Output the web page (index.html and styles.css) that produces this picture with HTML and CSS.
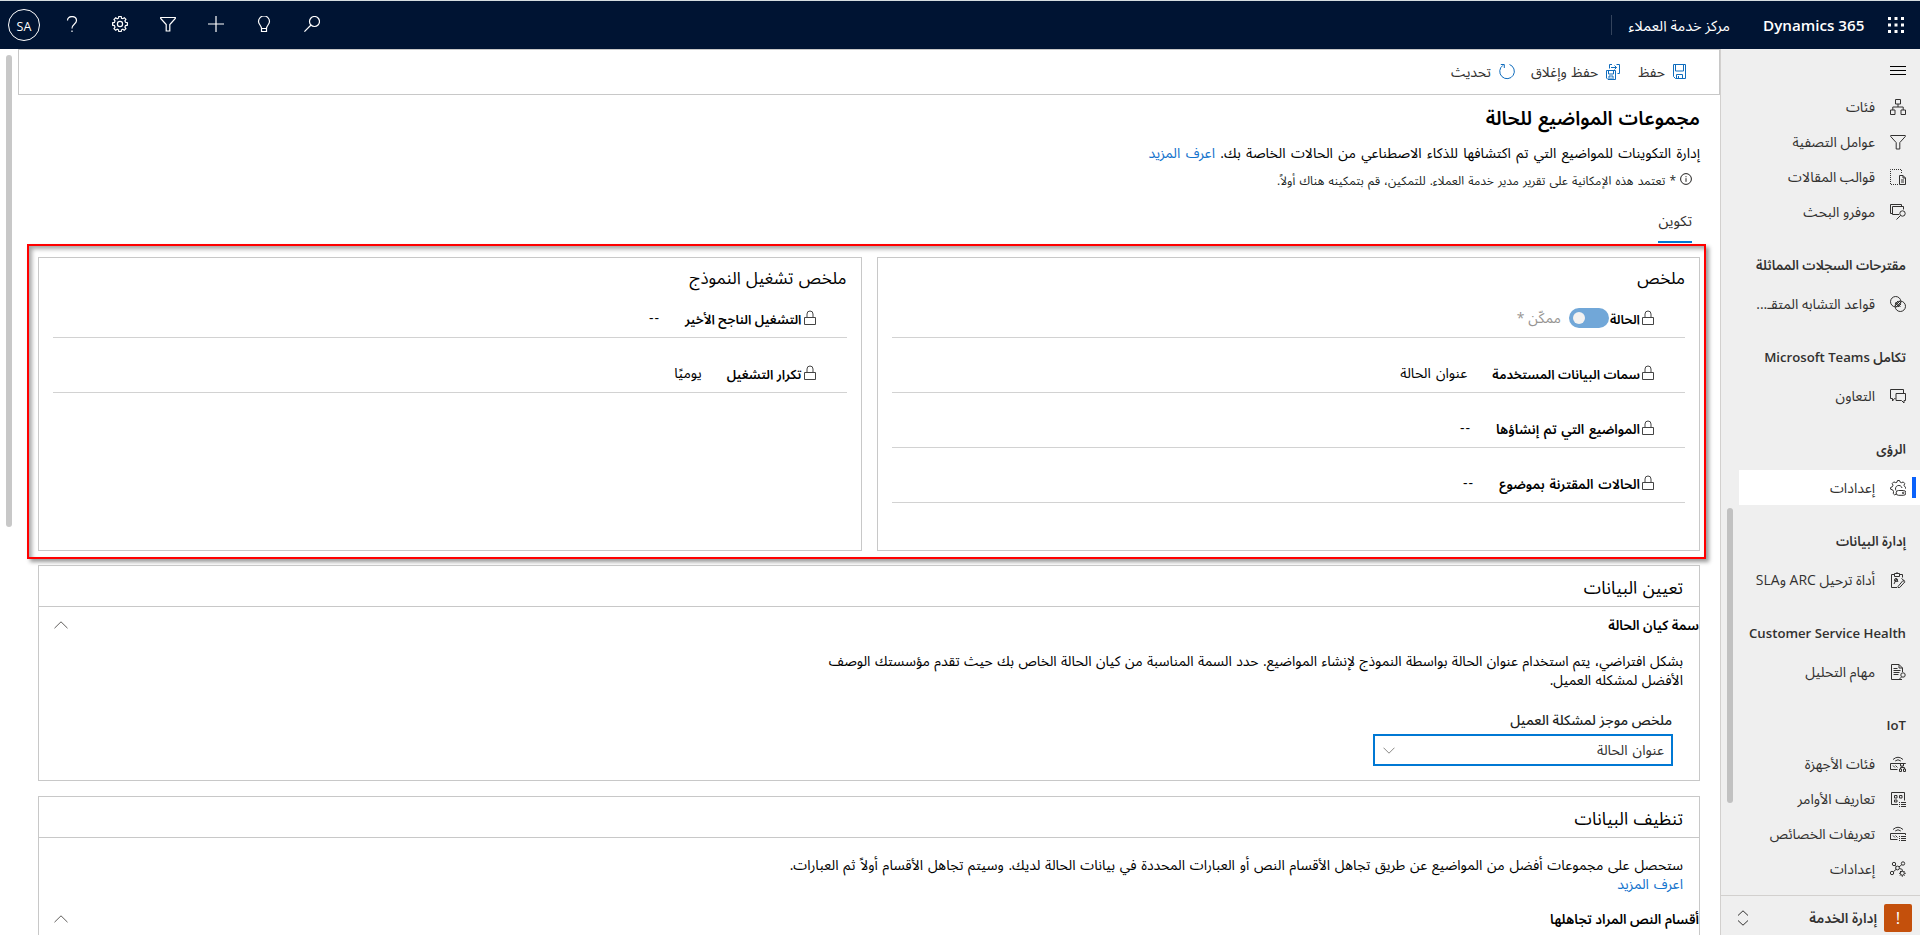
FILE: index.html
```html
<!DOCTYPE html>
<html lang="ar" dir="rtl">
<head>
<meta charset="utf-8">
<title>مركز خدمة العملاء</title>
<link rel="stylesheet" href="styles.css">
</head>
<body>
<svg class="defs" width="0" height="0">
  <symbol id="lock" viewBox="0 0 12 16"><path d="M.5 7.500h11v7H.5zM3 7.500V4a3 3 0 0 1 6 0v3.500"/></symbol>
  <symbol id="up" viewBox="0 0 14 8"><path d="M.5 7.200 7 .8l6.500 6.400"/></symbol>
  <symbol id="router" viewBox="0 0 16 16"><path d="M3 3.500Q8-1 13 3.500M5.200 5Q8 2.500 10.800 5M7.500 13.500h-7v-6h15V9M3 9.500l2 2M5.500 9.500l2 2"/></symbol>
  <symbol id="funnel" viewBox="0 0 16 16"><path d="M.7 1.500h14.600v1L9.800 8.600v6.400H6.200V8.600L.7 2.500z"/></symbol>
</svg>
<header class="topbar">
  <svg class="waffle" viewBox="0 0 16 16"><path d="M0 0h3v3H0zM6.500 0h3v3h-3zM13 0h3v3h-3zM0 6.500h3v3H0zM6.500 6.500h3v3h-3zM13 6.500h3v3h-3zM0 13h3v3H0zM6.500 13h3v3h-3zM13 13h3v3h-3z"/></svg>
  <span class="brand">Dynamics 365</span>
  <span class="app-name">مركز خدمة العملاء</span>
  <nav class="tools">
    <svg viewBox="0 0 16 16"><circle cx="10.500" cy="5.500" r="5"/><path d="M7 9 .4 15.600"/></svg>
    <svg viewBox="0 0 16 16"><path d="M5.500 12.500c0-3-3-4-3-7a5.500 5.500 0 0 1 11 0c0 3-3 4-3 7zM5.500 12.500v3h5v-3"/></svg>
    <svg viewBox="0 0 16 16"><path d="M8 0v16M0 8h16"/></svg>
    <svg viewBox="0 0 16 16"><use href="#funnel"/></svg>
    <svg viewBox="0 0 16 16"><path d="m6.500 2.200.3-1.700h2.400l.3 1.700 1.300.5 1.500-1 1.600 1.700-1 1.400.6 1.500 1.900.4v2.500l-1.900.4-.6 1.500 1 1.500-1.700 1.600-1.400-1-1.300.6-.3 1.700H6.800l-.3-1.700-1.300-.6-1.500 1L2 12.600l1-1.500-.6-1.500-1.800-.4V6.800l1.800-.4.6-1.500-1-1.400 1.700-1.700 1.500 1z"/><circle cx="8" cy="8" r="2.600"/></svg>
    <svg viewBox="0 0 16 16"><path d="M3.500 4.500C3.500-.8 12.500-.8 12.500 4.500c0 3.500-4.500 3.500-4.500 8M8 14.500V16"/></svg>
    <span class="avatar">SA</span>
  </nav>
</header>
<div class="shell">
  <aside class="sidebar">
    <div class="nav">
      <svg class="burger" viewBox="0 0 16 10"><path d="M0 .5h16M0 4.500h16M0 8.500h16"/></svg>
      <a class="item"><svg viewBox="0 0 16 16"><path d="M5.500.5h5v4.500h-5zM.5 11h4.500v4.500H.5zM11 11h4.500v4.500H11zM8 5v3M2.800 11V8h10.400v3"/></svg><span>فئات</span></a>
      <a class="item"><svg><use href="#funnel"/></svg><span>عوامل التصفية</span></a>
      <a class="item"><svg viewBox="0 0 16 16"><path stroke-dasharray="1 1" d="M11.500 4V.5H.5v15H8"/><path d="M9.500 6.500h3.500l2.500 2.500v6.500h-6zM13 6.500V9h2.500M11 11h3M11 13h3"/></svg><span>قوالب المقالات</span></a>
      <a class="item"><svg viewBox="0 0 16 16"><path d="M2.500 9.500h-2v-9h11v2M9 10.500H2.500v-8h11v3M10.500 11.500l-4 4"/><circle cx="12.500" cy="9.500" r="2.700"/></svg><span>موفرو البحث</span></a>
      <h2 class="group">مقترحات السجلات المماثلة</h2>
      <a class="item"><svg viewBox="0 0 16 16"><circle cx="5.700" cy="5.700" r="5.200"/><circle cx="10.300" cy="10.300" r="5.200"/><path d="M5 10l5-5M6 11l5-5M5 8l3-3M8 11l3-3M5.500 6l5 5"/></svg><span>قواعد التشابه المتقـ...</span></a>
      <h2 class="group">تكامل Microsoft Teams</h2>
      <a class="item"><svg viewBox="0 0 16 16"><path d="M5.500 10.500H4.500L2.500 13v-2.500h-2v-9h13V5M6 5.500h9.500v7H14V15l-2.500-2.500H6z"/></svg><span>التعاون</span></a>
      <h2 class="group">الرؤى</h2>
      <a class="item active"><svg viewBox="0 0 16 16"><path d="m6.500 14-2 .8-1.300-1.300.4-1.800L2.800 10l-2.200-.8V7.500l1.700-.7.700-1.600-.8-1.700 1.600-1.600 1.800.7L7 2.200 7.500.5h2l.7 1.700 1.500.5 1.500-.8L14.700 3.500l-.7 1.800.6 1.300 1 .6v1.500"/><path d="M6 10.500a3.300 3.300 0 1 1 6-2.500M8.500 10.500h5a2.300 2.300 0 0 1 0 4.800h-5a2.300 2.300 0 0 1 0-4.800z"/><circle cx="13.200" cy="12.900" r=".8"/></svg><span>إعدادات</span></a>
      <h2 class="group">إدارة البيانات</h2>
      <a class="item"><svg viewBox="0 0 16 16"><path d="M4.500 2.500h-3v13H7M9.500 2.500h3v3M4.500 1.500h5v3h-5zM7 1.500V0M4 12l2.300-5L8 10M8 14.500l5-6 1.700 1.500-5 5.500H8z"/><circle cx="6" cy="8" r="1.500"/><path d="M11.500 6.500l3.700 3"/></svg><span>أداة ترحيل ARC وSLA</span></a>
      <h2 class="group">Customer Service Health</h2>
      <a class="item"><svg viewBox="0 0 16 16"><path d="M12.500 8V4L9 .5H1.500v15h10.500M9 .5V4h3.500M3.500 4.500h4M3.500 6.500h7M3.500 8.500h6M3.500 10.500h5M11.500 13l-2.500 2.500"/><circle cx="13" cy="11" r="2.200"/></svg><span>مهام التحليل</span></a>
      <h2 class="group">IoT</h2>
      <a class="item"><svg viewBox="0 0 16 16"><use href="#router"/><path class="patch" d="M9 8h7v8H8.500z"/><path d="M10.500 7.500h3v2.500h-3zM9.500 13h2v2.500h-2zM13.500 13h2v2.500h-2zM12 10v1.500M10.500 13v-1.500h4V13"/></svg><span>فئات الأجهزة</span></a>
      <a class="item"><svg viewBox="0 0 16 16"><path d="M14.500 9.500V1.500h-13v12H8M4.500 4.500H7V7H4.500zM9.500 4.500H12V7H9.500zM4.500 9H7v2H4.500zM9 11.500h1M11 11.500h5M9 13.500h1M11 13.500h5M9 15.500h1M11 15.500h5"/></svg><span>تعاريف الأوامر</span></a>
      <a class="item"><svg viewBox="0 0 16 16"><use href="#router"/><path d="M9 10.500h1M11 10.500h5M9 12.500h1M11 12.500h5M9 14.500h1M11 14.500h5"/></svg><span>تعريفات الخصائص</span></a>
      <a class="item"><svg viewBox="0 0 16 16"><circle cx="4" cy="3" r="1.700"/><circle cx="13" cy="2.500" r="1.700"/><circle cx="2" cy="12" r="1.700"/><circle cx="7.500" cy="7" r="1.900"/><path d="M5 4.400 6.300 5.600M9 5.900l2.800-2.200M6.200 8.300 3.300 10.800M9.500 7.500l3 1"/><circle cx="12.300" cy="12.300" r="2"/><path d="M12.300 9v1.300M12.300 14.300v1.500M9 12.300h1.300M14.300 12.300h1.500M10 10l1 1M14.600 10l-1 1M10 14.600l1-1M14.600 14.600l-1-1"/></svg><span>إعدادات</span></a>
    </div>
    <div class="nav-thumb"></div>
    <footer class="area">
      <span class="area-badge">!</span><span class="area-name">إدارة الخدمة</span>
      <svg viewBox="0 0 12 16"><path d="M1 5.500 6 .8l5 4.700M1 10.500l5 4.700 5-4.700"/></svg>
    </footer>
  </aside>
  <main class="main">
    <div class="commands">
      <span class="cmd"><svg width="13" height="15" viewBox="0 0 13 15"><path d="M.5.500h12v14h-10l-2-2zM2.500.500v6.500h8V.500M3.500 14.500v-4h6v4M5.500 12v2.500"/></svg><span>حفظ</span></span>
      <span class="cmd wide"><svg width="14" height="16" viewBox="0 0 14 16"><path d="M.5 6.500h9v9H2l-1.500-1.500zM2.500 6.500v3.500h5V6.500M3 15.500V12h4v3.500M5 13.500v2M3.500 4.500v-4H6M10.500.500h3v9h-2M5 3.500h5.500M8.500 1.500l2 2-2 2"/></svg><span>حفظ وإغلاق</span></span>
      <span class="cmd wide"><svg width="16" height="18" viewBox="0 0 16 18"><path d="M10.500 1.500a7.300 7.300 0 1 1-6.500.8M5.300 5V1.500H1.800"/></svg><span>تحديث</span></span>
    </div>
    <section class="intro">
      <h1>مجموعات المواضيع للحالة</h1>
      <p class="desc">إدارة التكوينات للمواضيع التي تم اكتشافها للذكاء الاصطناعي من الحالات الخاصة بك. <a>اعرف المزيد</a></p>
      <p class="note"><svg viewBox="0 0 12 12"><circle cx="6" cy="6" r="5.400"/><path d="M6 5.200v3.600M6 3.200v1"/></svg><span>* تعتمد هذه الإمكانية على تقرير مدير خدمة العملاء. للتمكين، قم بتمكينه هناك أولاً.</span></p>
      <div class="tab">تكوين</div>
    </section>
    <section class="highlight">
      <div class="card">
        <h3>ملخص</h3>
        <div class="row"><svg><use href="#lock"/></svg><b>الحالة</b><span class="toggle"></span><span class="val muted">ممكّن *</span></div>
        <div class="row"><svg><use href="#lock"/></svg><b>سمات البيانات المستخدمة</b><span class="val">عنوان الحالة</span></div>
        <div class="row"><svg><use href="#lock"/></svg><b class="loose">المواضيع التي تم إنشاؤها</b><span class="val none">--</span></div>
        <div class="row"><svg><use href="#lock"/></svg><b class="loose">الحالات المقترنة بموضوع</b><span class="val none">--</span></div>
      </div>
      <div class="card">
        <h3>ملخص تشغيل النموذج</h3>
        <div class="row"><svg><use href="#lock"/></svg><b>التشغيل الناجح الأخير</b><span class="val none">--</span></div>
        <div class="row"><svg><use href="#lock"/></svg><b>تكرار التشغيل</b><span class="val">يوميًا</span></div>
      </div>
    </section>
    <section class="panel mapping">
      <h3>تعيين البيانات</h3>
      <div class="fold"><b>سمة كيان الحالة</b><svg><use href="#up"/></svg></div>
      <p class="para">بشكل افتراضي، يتم استخدام عنوان الحالة بواسطة النموذج لإنشاء المواضيع. حدد السمة المناسبة من كيان الحالة الخاص بك حيث تقدم مؤسستك الوصف<br>الأفضل لمشكله العميل.</p>
      <label class="field-label">ملخص موجز لمشكلة العميل</label>
      <div class="select"><span>عنوان الحالة</span><svg viewBox="0 0 12 7"><path d="M.5.700 6 6.200 11.500.700"/></svg></div>
    </section>
    <section class="panel cleanup">
      <h3>تنظيف البيانات</h3>
      <p class="para">ستحصل على مجموعات أفضل من المواضيع عن طريق تجاهل الأقسام النص أو العبارات المحددة في بيانات الحالة لديك. وسيتم تجاهل الأقسام أولاً ثم العبارات.<br><a>اعرف المزيد</a></p>
      <div class="fold"><b>أقسام النص المراد تجاهلها</b><svg><use href="#up"/></svg></div>
    </section>
    <div class="main-thumb"></div>
  </main>
</div>
</body>
</html>
```
FILE: styles.css
```css
* { box-sizing: border-box; }
html, body { height: 935px; overflow: hidden; }
body { margin: 0; background: #fff; color: #000; font: 14px/20px "Open Sans", "Noto Sans Arabic", "DejaVu Sans", sans-serif; }
h1, h2, h3, p { margin: 0; }
svg { fill: none; stroke: currentColor; flex: none; display: block; }
.defs { position: absolute; }
a { color: #1272cc; white-space: nowrap; }
span, b, h1, h2, h3 { white-space: nowrap; }

.topbar { height: 49px; border-top: 1px solid #d5dde0; background: #001433; color: #fff; display: flex; align-items: center; padding-right: 16px; }
.waffle { width: 16px; height: 16px; fill: #fff; stroke: none; }
.brand { width: 101px; margin-right: 24px; font-size: 15.200px; font-weight: 600; direction: ltr; text-align: right; }
.app-name { margin-right: 33px; padding-left: 17px; border-left: 1px solid #33435c; font-size: 14.600px; line-height: 20px; }
.tools { margin-right: auto; display: flex; align-items: center; gap: 32px; padding-left: 8px; }
.tools svg { width: 16px; height: 16px; stroke-width: 1.2; margin-bottom: 2px; }
.tools .avatar { margin-right: -8px; width: 32px; height: 32px; border: 1px solid #fff; border-radius: 50%; font-size: 12.500px; line-height: 33px; text-align: center; }

.shell { display: flex; height: 886px; overflow: hidden; }
.sidebar { position: relative; width: 200px; flex: none; background: #efefef; border-left: 1px solid #d2d0ce; color: #323130; display: flex; flex-direction: column; }
.nav { flex: 1; display: flex; flex-direction: column; padding-top: 17px; min-height: 0; }
.burger { width: 16px; height: 10px; margin: 0 14px 13px 0; stroke: #000; }
.item { height: 35px; flex: none; display: flex; align-items: center; gap: 15px; padding-right: 14px; margin-left: 18px; color: inherit; position: relative; }
.item svg { width: 16px; height: 16px; }
.item .patch { fill: #efefef; stroke: none; }
.item.active { background: #fff; }
.item.active::before { content: ""; position: absolute; right: 4px; top: 7px; width: 4px; height: 21px; background: #0b62fb; }
.group { height: 57px; flex: none; padding: 26px 14px 0 0; font-size: 13.200px; line-height: 20px; font-weight: 600; }
.nav-thumb { position: absolute; left: 6px; top: 459px; width: 6px; height: 295px; border-radius: 3px; background: #c1c1c1; }
.area { height: 40px; flex: none; border-top: 1px solid #d2d0ce; display: flex; align-items: center; padding: 4px 8px 0 16px; }
.area-badge { width: 28px; height: 28px; border-radius: 2px; background: #c4500c; color: #fff; text-align: center; font-size: 17px; line-height: 28px; }
.area-name { margin: 0 7px 0 auto; font-size: 13.800px; font-weight: 600; }
.area svg { width: 12px; height: 16px; }

.main { flex: 1; position: relative; padding: 0 0 0 18px; min-width: 0; }
.commands { height: 46px; border: 1px solid #c8c8c8; display: flex; align-items: center; padding: 0 33px 0 0; color: #323130; }
.cmd { display: flex; align-items: center; gap: 8px; word-spacing: 1px; }
.cmd.wide { margin-right: 18px; }
.cmd.wide + .wide { margin-right: 16px; }
.cmd svg { color: #0f6cbd; margin-bottom: 1px; }
.intro { padding: 10px 20px 0 0; height: 149px; }
h1 { font-size: 19.500px; line-height: 26px; font-weight: 600; word-spacing: 1px; }
.desc { margin-top: 12px; line-height: 20px; word-spacing: 1.750px; }
.note { display: flex; align-items: center; gap: 4px; margin: 8px 8px 0 0; font-size: 12px; line-height: 20px; word-spacing: 1px; color: #201f1e; }
.note svg { width: 12px; height: 12px; margin-bottom: 4px; }
.tab { width: 34px; height: 32px; margin: 20px 8px 0 0; border-bottom: 2px solid #0078d4; color: #323130; font-size: 14.500px; line-height: 20px; white-space: nowrap; }

.highlight { margin: 0 14px 0 9px; height: 315px; border: 2px solid #f00; box-shadow: 3px 3px 4px rgba(0,0,0,.4), inset 3px 3px 4px rgba(0,0,0,.35); display: flex; gap: 15px; padding: 11px 4px 6px 9px; }
.card { flex: 1; border: 1px solid #c8c8c8; padding: 7px 14px 0; }
.card h3, .panel h3 { font-size: 17px; line-height: 26px; font-weight: 400; word-spacing: 1px; }
.row { height: 55px; border-bottom: 1px solid #d2d2d2; display: flex; align-items: center; padding: 16px 31px 0 0; }
.card h3 + .row { height: 47px; padding-top: 8px; }
.row svg { width: 12px; height: 16px; margin: 0 0 1px 2px; color: #444; }
.row b { font-size: 13px; font-weight: 600; padding-top: 2px; }
.row b.loose { font-size: 13.400px; word-spacing: 1.200px; }
.row .val { margin-right: 25px; word-spacing: 1.500px; }
.row .none { letter-spacing: 1px; }
.row .muted { margin-right: 8px; color: #979593; word-spacing: 0; }
.toggle { width: 40px; height: 20px; margin: 0 1px 1px 0; border-radius: 10px; background: #71a7d8; padding: 4px; display: flex; justify-content: flex-end; }
.toggle::before { content: ""; width: 12px; height: 12px; border-radius: 50%; background: #f3f2f1; }

.panel { margin: 6px 20px 0 20px; border: 1px solid #c8c8c8; }
.panel h3 { height: 41px; border-bottom: 1px solid #c8c8c8; padding: 8px 16px 0 0; font-size: 17.500px; }
.mapping { height: 216px; }
.cleanup { margin-top: 15px; height: 200px; }
.fold { display: flex; justify-content: space-between; align-items: center; height: 36px; padding-left: 15px; }
.fold b { font-size: 13.500px; font-weight: 600; }
.fold svg { width: 14px; height: 8px; color: #605e5c; }
.para { padding: 8px 16px 0 0; line-height: 19px; white-space: nowrap; word-spacing: .8px; }
.cleanup .para { padding: 17px 16px 8px 0; word-spacing: 1.150px; }
.field-label { display: block; padding: 21px 27px 0 0; font-weight: 500; color: #201f1e; }
.select { width: 300px; height: 32px; margin: 4px 26px 0 0; border: 2px solid #0078d4; display: flex; align-items: center; justify-content: space-between; padding: 0 7px 0 8px; color: #323130; word-spacing: 1.500px; }
.select svg { width: 12px; height: 7px; color: #8a8886; }
.main-thumb { position: absolute; left: 6px; top: 6px; width: 6px; height: 472px; border-radius: 3px; background: #c8c8c8; }
```
